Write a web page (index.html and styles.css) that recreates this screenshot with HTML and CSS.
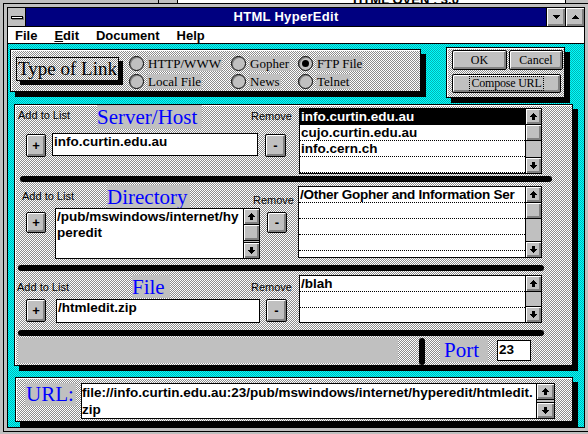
FILE: index.html
```html
<!DOCTYPE html>
<html>
<head>
    <meta charset="UTF-8">
    <title>HTML HyperEdit</title>
    <link rel="stylesheet" href="styles.css">
</head>
<body>
    <div class="behind">
        <div class="behind-side"></div>
        <div class="behind-main">HTML OVEN : 3.0</div>
    </div>

    <div class="window">
        <div class="frame">
            <div class="titlebar">
                <div class="sysmenu"><span class="sysbar"></span></div>
                <div class="title">HTML HyperEdit</div>
                <div class="tbtn">
                    <svg width="7" height="4" viewBox="0 0 7 4"><path d="M0 0h7v1H6v1H5v1H4v1H3V3H2V2H1V1H0z"/></svg>
                </div>
                <div class="tbtn">
                    <svg width="7" height="4" viewBox="0 0 7 4"><path d="M3 0h1v1h1v1h1v1h1v1H0V3h1V2h1V1h1z"/></svg>
                </div>
            </div>

            <div class="menubar">
                <span class="menu">File</span>
                <span class="menu"><u>E</u>dit</span>
                <span class="menu">Document</span>
                <span class="menu">Help</span>
            </div>

            <div class="client">
                <div class="toprow">
                    <div class="panel typepanel">
                        <div class="typebox">Type of Link</div>
                        <div class="radios">
                            <div class="radiocol col1">
                                <div class="radio"><span class="dot"></span><span class="rlabel">HTTP/WWW</span></div>
                                <div class="radio"><span class="dot"></span><span class="rlabel">Local File</span></div>
                            </div>
                            <div class="radiocol col2">
                                <div class="radio"><span class="dot"></span><span class="rlabel">Gopher</span></div>
                                <div class="radio"><span class="dot"></span><span class="rlabel">News</span></div>
                            </div>
                            <div class="radiocol">
                                <div class="radio"><span class="dot on"></span><span class="rlabel">FTP File</span></div>
                                <div class="radio"><span class="dot"></span><span class="rlabel">Telnet</span></div>
                            </div>
                        </div>
                    </div>

                    <div class="panel btnpanel">
                        <div class="btnrow">
                            <div class="btn btn-ok">OK</div>
                            <div class="btn btn-cancel">Cancel</div>
                        </div>
                        <div class="btn btn-compose"><span class="focus">Compose URL</span></div>
                    </div>
                </div>

                <div class="panel mainpanel">
                    <!-- server / host -->
                    <div class="sec sec-server">
                        <div class="left">
                            <div class="head">
                                <div class="lbl add">Add to List</div>
                                <div class="ttl">Server/Host</div>
                                <div class="lbl rem">Remove</div>
                            </div>
                            <div class="ctrls">
                                <div class="pb plus">+</div>
                                <div class="field">info.curtin.edu.au</div>
                                <div class="pb minus">-</div>
                            </div>
                        </div>
                        <div class="listbox">
                            <div class="items">
                                <div class="item sel">info.curtin.edu.au</div>
                                <div class="item">cujo.curtin.edu.au</div>
                                <div class="item">info.cern.ch</div>
                                <div class="item"></div>
                            </div>
                            <div class="vscroll">
                                <div class="sbtn"><svg width="7" height="7" viewBox="0 0 7 7"><path d="M3 0h1v1h1v1h1v1h1v1H5v3H2V4H0V3h1V2h1V1h1z"/></svg></div>
                                <div class="thumb"></div>
                                <div class="track"></div>
                                <div class="sbtn down"><svg width="7" height="7" viewBox="0 0 7 7"><path d="M2 0h3v3h2v1H6v1H5v1H4v1H3V6H2V5H1V4H0V3h2z"/></svg></div>
                            </div>
                        </div>
                    </div>
                    <div class="sep sep1"></div>

                    <!-- directory -->
                    <div class="sec sec-dir">
                        <div class="left">
                            <div class="head">
                                <div class="lbl add">Add to List</div>
                                <div class="ttl">Directory</div>
                                <div class="lbl rem">Remove</div>
                            </div>
                            <div class="ctrls">
                                <div class="pb plus">+</div>
                                <div class="tarea">
                                    <div class="tatext">/pub/mswindows/internet/hy<br>peredit</div>
                                    <div class="vscroll">
                                        <div class="sbtn"><svg width="7" height="7" viewBox="0 0 7 7"><path d="M3 0h1v1h1v1h1v1h1v1H5v3H2V4H0V3h1V2h1V1h1z"/></svg></div>
                                        <div class="thumb"></div>
                                        <div class="track"></div>
                                        <div class="sbtn down"><svg width="7" height="7" viewBox="0 0 7 7"><path d="M2 0h3v3h2v1H6v1H5v1H4v1H3V6H2V5H1V4H0V3h2z"/></svg></div>
                                    </div>
                                </div>
                                <div class="pb minus">-</div>
                            </div>
                        </div>
                        <div class="listbox">
                            <div class="items">
                                <div class="item">/Other Gopher and Information Ser</div>
                                <div class="item"></div>
                                <div class="item"></div>
                                <div class="item"></div>
                                <div class="item"></div>
                            </div>
                            <div class="vscroll">
                                <div class="sbtn"><svg width="7" height="7" viewBox="0 0 7 7"><path d="M3 0h1v1h1v1h1v1h1v1H5v3H2V4H0V3h1V2h1V1h1z"/></svg></div>
                                <div class="thumb"></div>
                                <div class="track"></div>
                                <div class="sbtn down"><svg width="7" height="7" viewBox="0 0 7 7"><path d="M2 0h3v3h2v1H6v1H5v1H4v1H3V6H2V5H1V4H0V3h2z"/></svg></div>
                            </div>
                        </div>
                    </div>
                    <div class="sep sep2"></div>

                    <!-- file -->
                    <div class="sec sec-file">
                        <div class="left">
                            <div class="head">
                                <div class="lbl add">Add to List</div>
                                <div class="ttl">File</div>
                                <div class="lbl rem">Remove</div>
                            </div>
                            <div class="ctrls">
                                <div class="pb plus">+</div>
                                <div class="field">/htmledit.zip</div>
                                <div class="pb minus">-</div>
                            </div>
                        </div>
                        <div class="listbox">
                            <div class="items">
                                <div class="item">/blah</div>
                                <div class="item"></div>
                                <div class="item"></div>
                            </div>
                            <div class="vscroll">
                                <div class="sbtn"><svg width="7" height="7" viewBox="0 0 7 7"><path d="M3 0h1v1h1v1h1v1h1v1H5v3H2V4H0V3h1V2h1V1h1z"/></svg></div>
                                <div class="track"></div>
                                <div class="sbtn down"><svg width="7" height="7" viewBox="0 0 7 7"><path d="M2 0h3v3h2v1H6v1H5v1H4v1H3V6H2V5H1V4H0V3h2z"/></svg></div>
                            </div>
                        </div>
                    </div>
                    <div class="sep sep3"></div>

                    <div class="portrow">
                        <div class="graybar"></div>
                        <div class="vbar"></div>
                        <div class="ttl portlbl">Port</div>
                        <div class="portin">23</div>
                    </div>
                </div>

                <div class="panel urlpanel">
                    <div class="ttl urllbl">URL:</div>
                    <div class="urlbox">
                        <div class="urltext">file://info.curtin.edu.au:23/pub/mswindows/internet/hyperedit/htmledit.<br>zip</div>
                        <div class="vscroll">
                            <div class="sbtn"><svg width="7" height="7" viewBox="0 0 7 7"><path d="M3 0h1v1h1v1h1v1h1v1H5v3H2V4H0V3h1V2h1V1h1z"/></svg></div>
                            <div class="track"></div>
                            <div class="sbtn down"><svg width="7" height="7" viewBox="0 0 7 7"><path d="M2 0h3v3h2v1H6v1H5v1H4v1H3V6H2V5H1V4H0V3h2z"/></svg></div>
                        </div>
                    </div>
                </div>
            </div>
        </div>
    </div>
</body>
</html>
```

FILE: styles.css
```css
html, body {
    margin: 0;
    padding: 0;
}

body {
    width: 588px;
    height: 434px;
    overflow: hidden;
    position: relative;
    background: #c0c0c0;
    font-family: "Liberation Sans", Arial, sans-serif;
    color: #000;
}

/* window peeking out behind */
.behind {
    position: absolute;
    left: 158px;
    top: -8px;
    width: 406px;
    height: 11px;
    border: 1px solid #000;
    background: #c0c0c0;
    display: flex;
}

.behind-side {
    width: 18px;
    border-right: 1px solid #000;
}

.behind-main {
    flex: 1;
    background: #fff;
    padding-left: 175px;
    font-weight: bold;
    font-size: 13px;
    line-height: 14px;
    white-space: nowrap;
    overflow: hidden;
}

/* main window */
.window {
    position: absolute;
    left: 3px;
    top: 3px;
    width: 586px;
    height: 429px;
    box-sizing: border-box;
    border: 1px solid #000;
    padding: 3px;
    background: #c0c0c0;
}

.frame {
    height: 100%;
    box-sizing: border-box;
    border: 1px solid #000;
    display: flex;
    flex-direction: column;
    background: #fff;
}

.titlebar {
    height: 18px;
    border-bottom: 1px solid #000;
    background: #000080;
    display: flex;
}

.sysmenu {
    width: 17px;
    border-right: 1px solid #000;
    background: #c0c0c0;
    display: flex;
    align-items: center;
    justify-content: center;
}

.sysbar {
    width: 10px;
    height: 1px;
    border: 1px solid #000;
    background: #fff;
    box-shadow: 1px 1px 0 #808080;
}

.title {
    flex: 1;
    text-align: center;
    color: #fff;
    font-weight: bold;
    font-size: 13px;
    line-height: 18px;
    letter-spacing: 0.3px;
}

.tbtn {
    width: 18px;
    border-left: 1px solid #000;
    background: #c0c0c0;
    box-shadow: inset 1px 1px #fff, inset -2px -2px #808080;
    display: flex;
    align-items: center;
    justify-content: center;
}

.menubar {
    height: 16px;
    border-bottom: 1px solid #000;
    background: #fff;
    padding-left: 7px;
    display: flex;
    align-items: center;
    font-weight: bold;
    font-size: 13px;
}

.menu + .menu {
    margin-left: 17px;
}

.menu u {
    text-underline-offset: 1px;
}

/* client area */
.client {
    flex: 1;
    background: repeating-conic-gradient(#00ffff 0 25%, #00b4b4 0 50%) 0 0 / 2px 2px;
    padding-left: 2px;
    display: flex;
    flex-direction: column;
    align-items: flex-start;
}

.panel {
    box-sizing: border-box;
    border: 1px solid #000;
    background: repeating-conic-gradient(#8c8c8c 0 25%, #fff 0 50%) 0 0 / 2px 2px;
    box-shadow: inset 1px 1px #fff, 5px 5px 0 #000;
}

.toprow {
    display: flex;
    align-items: flex-start;
}

.typepanel {
    width: 411px;
    height: 43px;
    margin-top: 5px;
    display: flex;
    align-items: flex-start;
}

.typebox {
    margin: 7px 0 0 5px;
    width: 103px;
    height: 24px;
    box-sizing: border-box;
    border: 1px solid #000;
    box-shadow: 4px 4px 0 #000;
    padding-left: 1px;
    font-family: "Liberation Serif", serif;
    font-size: 19px;
    line-height: 22px;
    white-space: nowrap;
}

.radios {
    display: flex;
    margin: 6px 0 0 10px;
}

.radiocol {
    display: flex;
    flex-direction: column;
    gap: 3px;
}

.col1 { width: 102px; }
.col2 { width: 67px; }

.radio {
    display: flex;
    align-items: center;
    height: 15px;
}

.dot {
    width: 15px;
    height: 15px;
    box-sizing: border-box;
    border: 1px solid #000;
    border-radius: 50%;
    background: #c0c0c0;
    box-shadow: inset 1px 1px #808080;
    margin-right: 3px;
    display: flex;
    align-items: center;
    justify-content: center;
}

.dot.on::after {
    content: "";
    width: 7px;
    height: 7px;
    border-radius: 50%;
    background: #000;
}

.rlabel {
    background: #c0c0c0;
    font-family: "Liberation Serif", serif;
    font-size: 13px;
    line-height: 15px;
    padding: 0 1px;
    white-space: nowrap;
}

.btnpanel {
    width: 119px;
    height: 51px;
    margin: 3px 0 0 25px;
    padding: 2px 0 0 5px;
}

.btnrow {
    display: flex;
    gap: 2px;
}

.btn {
    box-sizing: border-box;
    height: 20px;
    border: 1px solid #000;
    border-radius: 2px;
    background: #c0c0c0;
    box-shadow: inset 1px 1px #fff, inset -2px -2px #808080;
    font-family: "Liberation Serif", serif;
    font-size: 12px;
    display: flex;
    align-items: center;
    justify-content: center;
}

.btn-ok { width: 55px; }
.btn-cancel { width: 54px; }

.btn-compose {
    width: 109px;
    height: 19px;
    margin-top: 4px;
    letter-spacing: -0.2px;
}

.focus {
    border: 1px dotted #000;
    padding: 0 1px;
    line-height: 13px;
}

/* big panel */
.mainpanel {
    width: 559px;
    height: 262px;
    margin: 6px 0 0 4px;
    display: flex;
    flex-direction: column;
}

.sec {
    display: flex;
    align-items: flex-start;
}

.sec-server { height: 71px; }
.sec-dir { height: 83px; }
.sec-file { height: 59px; }

.head {
    display: flex;
    align-items: flex-start;
}

.lbl {
    font-size: 11px;
    line-height: 13px;
    white-space: nowrap;
}

.add {
    box-sizing: border-box;
}

.ttl {
    box-sizing: border-box;
    background: #c0c0c0;
    color: #0000ff;
    font-family: "Liberation Serif", serif;
    font-size: 21px;
    line-height: 24px;
    white-space: nowrap;
}

.ctrls {
    display: flex;
    align-items: flex-start;
}

.pb {
    box-sizing: border-box;
    width: 20px;
    height: 23px;
    border: 1px solid #000;
    border-radius: 2px;
    background: #c0c0c0;
    box-shadow: inset 1px 1px #fff, inset -2px -2px #808080;
    font-weight: bold;
    font-size: 13px;
    display: flex;
    align-items: center;
    justify-content: center;
}

.field, .tatext, .urltext, .item, .portin {
    font-weight: bold;
    font-size: 13.5px;
    white-space: nowrap;
}

.field {
    box-sizing: border-box;
    border: 1px solid #000;
    background: #fff;
    line-height: 16px;
    padding-left: 1px;
}

/* per-section placement */
.sec-server .left { width: 284px; }
.sec-server .add { width: 82px; padding: 4px 0 0 3px; }
.sec-server .ttl { width: 105px; height: 24px; }
.sec-server .rem { margin-left: 49px; padding-top: 5px; }
.sec-server .ctrls { margin-top: 2px; }
.sec-server .plus { margin: 1px 0 0 11px; }
.sec-server .field { width: 206px; height: 23px; margin-left: 6px; }
.sec-server .minus { width: 21px; margin: 1px 0 0 7px; }
.sec-server .listbox { width: 243px; height: 66px; margin-top: 3px; }

.sec-dir .left { width: 283px; }
.sec-dir .add { width: 92px; padding: 8px 0 0 7px; }
.sec-dir .ttl { width: 83px; height: 23px; margin-top: 3px; }
.sec-dir .rem { margin-left: 63px; padding-top: 12px; }
.sec-dir .plus { height: 21px; margin: 4px 0 0 11px; }
.sec-dir .tarea { width: 205px; height: 51px; margin-left: 9px; }
.sec-dir .minus { height: 21px; margin: 4px 0 0 7px; }
.sec-dir .listbox { width: 244px; height: 72px; margin-top: 4px; }
.sec-dir .item { letter-spacing: -0.25px; }

.sec-file .left { width: 284px; }
.sec-file .head { height: 28px; }
.sec-file .add { width: 117px; padding: 10px 0 0 2px; }
.sec-file .ttl { width: 38px; height: 23px; margin-top: 4px; }
.sec-file .rem { margin-left: 81px; padding-top: 10px; }
.sec-file .plus { margin-left: 11px; }
.sec-file .field { width: 204px; height: 24px; margin-left: 10px; }
.sec-file .minus { width: 21px; margin-left: 6px; }
.sec-file .listbox { width: 243px; height: 48px; margin-top: 4px; }

.sec-server .head, .sec-dir .head { height: 26px; }

.sep {
    height: 6px;
    background: #000;
    border-radius: 3px;
}

.sep1 { width: 532px; margin-left: 5px; }
.sep2, .sep3 { width: 526px; margin-left: 3px; }

/* list boxes */
.listbox, .tarea, .urlbox {
    box-sizing: border-box;
    border: 1px solid #000;
    background: #fff;
    display: flex;
}

.items {
    flex: 1;
    overflow: hidden;
}

.item {
    height: 16px;
    box-sizing: border-box;
    border-bottom: 1px dotted #000;
    line-height: 15px;
    padding-left: 1px;
    overflow: hidden;
}

.item.sel {
    background: #000;
    color: #fff;
}

.tatext {
    flex: 1;
    line-height: 16px;
    padding-left: 1px;
    overflow: hidden;
}

.vscroll {
    width: 16px;
    flex: none;
    box-sizing: border-box;
    border-left: 1px solid #000;
    background: #c0c0c0;
    display: flex;
    flex-direction: column;
}

.sbtn, .thumb {
    height: 16px;
    flex: none;
    box-sizing: border-box;
    border-bottom: 1px solid #000;
    background: #c0c0c0;
    box-shadow: inset 1px 1px #fff, inset -2px -2px #808080;
    display: flex;
    align-items: center;
    justify-content: center;
}

.sbtn.down {
    border-bottom: 0;
    border-top: 1px solid #000;
}

.track {
    flex: 1;
}

/* port row */
.portrow {
    display: flex;
    align-items: flex-start;
}

.graybar {
    width: 380px;
    height: 25px;
    margin: 2px 0 0 3px;
    background: #c0c0c0;
}

.vbar {
    width: 6px;
    height: 27px;
    margin: 2px 0 0 21px;
    background: #000;
    border-radius: 3px;
}

.portlbl {
    width: 48px;
    height: 24px;
    margin: 2px 0 0 15px;
    padding-left: 4px;
}

.portin {
    box-sizing: border-box;
    width: 34px;
    height: 21px;
    margin: 4px 0 0 9px;
    border: 1px solid #000;
    background: #fff;
    line-height: 17px;
    padding-left: 1px;
}

/* url panel */
.urlpanel {
    width: 558px;
    height: 45px;
    margin: 11px 0 0 5px;
    display: flex;
    align-items: flex-start;
}

.urllbl {
    width: 51px;
    height: 23px;
    margin: 5px 0 0 9px;
    padding-left: 1px;
    line-height: 23px;
}

.urlbox {
    width: 474px;
    height: 36px;
    margin: 5px 0 0 5px;
}

.urltext {
    flex: 1;
    line-height: 17px;
    overflow: hidden;
}

.urlbox .vscroll {
    width: 18px;
}
```
